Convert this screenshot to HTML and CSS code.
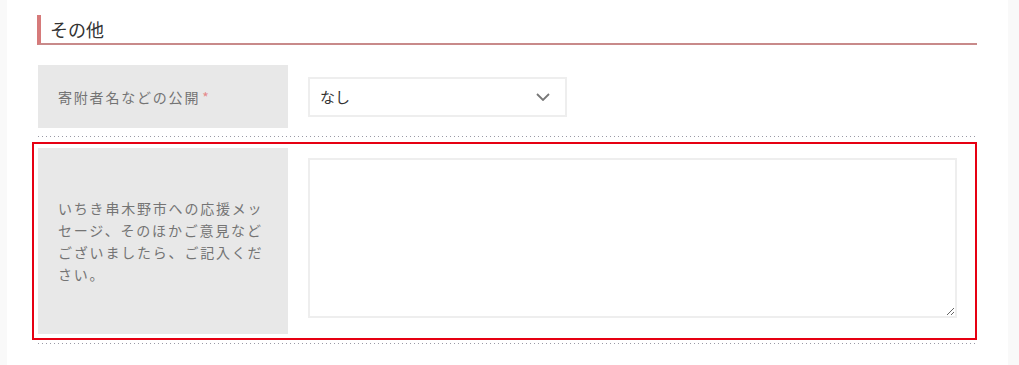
FILE: index.html
```html
<!DOCTYPE html>
<html>
	<head>
		<meta charset="UTF-8">
		<title>その他</title>
		<link rel="stylesheet" href="styles.css">
	</head>
	<body>
		<div class="wrap">
			<div class="box">
				<h2 class="ttl">その他</h2>
				<!-- 寄附者名の公開 -->
				<div class="row">
					<div class="label">寄附者名などの公開<span class="req">*</span></div>
					<div class="field">
						<div class="select">
							<span>なし</span>
							<svg class="arrow" width="14" height="8" viewBox="0 0 14 8"><path d="M1 1 L7 7 L13 1" fill="none" stroke="#777" stroke-width="1.8"/></svg>
						</div>
					</div>
				</div>
				<div class="dots"></div>
				<!-- メッセージ -->
				<div class="hl">
					<div class="row row2">
						<div class="label">いちき串木野市への応援メッセージ、そのほかご意見などございましたら、ご記入ください。</div>
						<div class="field field2">
							<textarea class="msg"></textarea>
						</div>
					</div>
				</div>
				<div class="dots dots2"></div>
			</div>
		</div>
	</body>
</html>
```

FILE: styles.css
```css
body{
	margin: 0;
	background: #fff;
	font-family: "Noto Sans CJK JP", "Noto Sans", sans-serif;
}
.wrap{
	width: 1019px;
	height: 365px;
	box-sizing: border-box;
	border-left: 7px solid #f9f9f9;
	border-right: 11px solid #f9f9f9;
	overflow: hidden;
}
.box{
	padding: 15px 31px 0 31px;
}
.ttl{
	margin: 0;
	height: 28px;
	border-left: 4px solid #d67a7a;
	border-bottom: 2px solid #c88a8a;
	padding-left: 9px;
	font: normal 18px/28px "Noto Sans CJK JP", sans-serif;
	color: #333;
	margin-left: -1px;
}
.row{
	display: flex;
	margin-top: 20px;
	min-height: 63px;
}
.label{
	width: 250px;
	flex-shrink: 0;
	box-sizing: border-box;
	background: #e8e8e8;
	padding: 0 20px;
	display: flex;
	align-items: center;
	font-size: 14px;
	line-height: 22px;
	letter-spacing: 1.8px;
	color: #747474;
}
.req{
	color: #e58a8a;
	margin-left: 2px;
}
.field{
	flex: 1;
	padding: 0 20px;
	display: flex;
	align-items: center;
}
.select{
	width: 259px;
	height: 40px;
	box-sizing: border-box;
	border: 2px solid #eee;
	display: flex;
	align-items: center;
	justify-content: space-between;
	padding: 0 15px 0 10px;
	font-size: 15px;
	color: #333;
}
.arrow{
	display: block;
}
.dots{
	height: 1px;
	margin-top: 8px;
	background: repeating-linear-gradient(to right, #9a9aa6 0 1px, transparent 1px 4px);
}
.hl{
	border: 2px solid #e60012;
	margin: 5px 0 0 -6px;
	padding: 4px 0 4px 4px;
}
.row2{
	margin-top: 0;
	min-height: 186px;
}
.field2{
	align-items: flex-start;
	padding-top: 10px;
}
.msg{
	display: block;
	width: 649px;
	height: 160px;
	box-sizing: border-box;
	border: 2px solid #eee;
	margin: 0;
	resize: vertical;
}
.dots2{
	margin-top: 3px;
}
```
